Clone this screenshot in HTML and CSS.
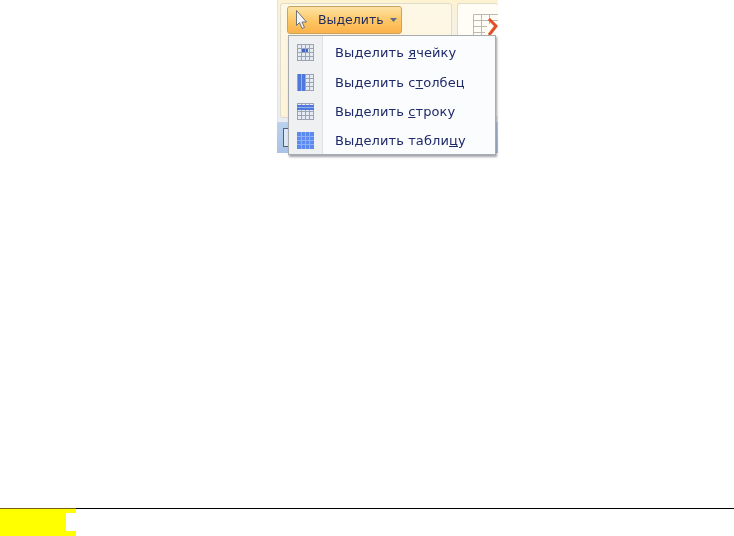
FILE: index.html
```html
<!DOCTYPE html>
<html lang="ru">
<head>
<meta charset="utf-8">
<title>Выделить</title>
<link rel="stylesheet" href="styles.css">
</head>
<body>
<div class="page">
  <div class="shot">
    <div class="ribbon">
      <div class="group group-a">
        <div class="select-btn">
          <svg class="cursor" width="14" height="20" viewBox="0 0 14 20"><path d="M2.500 .500v15l3-3 2.500 6 2.500-1-2.500-5.500h4.500z" fill="#f4f5f7" stroke="#6f7378" stroke-width="1"/></svg>
          <span class="btn-label">Выделить</span>
          <svg class="caret" width="7" height="4" viewBox="0 0 7 4"><path d="M0 0h7L3.500 4z" fill="#5a6a8a"/></svg>
        </div>
      </div>
      <div class="group group-b">
        <svg class="table-icon" width="25" height="24" viewBox="0 0 25 24"><path d="M.500 .500H25M.500 6.500H25M.500 12.500H14M.500 18.500H12M.500 .500V24M8.500 .500V24M16.500 .500V10" stroke="#bdb9b2" fill="none"/><path d="M16 5l7 7-7 9" stroke="#e2502a" stroke-width="3" fill="none"/></svg>
      </div>
    </div>
    <div class="statusbar"><span class="status-box"></span></div>
    <div class="menu">
      <div class="menu-item">
        <span class="icon-cell">
          <svg width="17" height="17" viewBox="0 0 17 17"><rect width="17" height="17" fill="#e6ebf3"/><rect x="5" y="4" width="6" height="5" fill="#3f66c8"/><path d="M.5 0v17M4.500 0v17M8.500 0v17M12.500 0v17M16.500 0v17M0 .5h17M0 4.500h17M0 8.500h17M0 12.500h17M0 16.500h17" stroke="#9aa4b4"/></svg>
        </span>
        <span class="item-text">Выделить <u>я</u>чейку</span>
      </div>
      <div class="menu-item">
        <span class="icon-cell">
          <svg width="17" height="17" viewBox="0 0 17 17"><rect width="17" height="17" fill="#e6ebf3"/><path d="M.5 0v17M4.500 0v17M8.500 0v17M12.500 0v17M16.500 0v17M0 .5h17M0 4.500h17M0 8.500h17M0 12.500h17M0 16.500h17" stroke="#9aa4b4"/><rect x="1" width="7" height="17" fill="#4f78dc"/><path d="M4.500 0v17" stroke="#8fb0ee"/></svg>
        </span>
        <span class="item-text">Выделить с<u>т</u>олбец</span>
      </div>
      <div class="menu-item">
        <span class="icon-cell">
          <svg width="17" height="17" viewBox="0 0 17 17"><rect width="17" height="17" fill="#e6ebf3"/><path d="M.5 0v17M4.500 0v17M8.500 0v17M12.500 0v17M16.500 0v17M0 .5h17M0 4.500h17M0 8.500h17M0 12.500h17M0 16.500h17" stroke="#9aa4b4"/><rect y="2" width="17" height="5" fill="#4f78dc"/><path d="M0 4.500h17" stroke="#8fb0ee"/></svg>
        </span>
        <span class="item-text">Выделить <u>с</u>троку</span>
      </div>
      <div class="menu-item">
        <span class="icon-cell">
          <svg width="17" height="17" viewBox="0 0 17 17"><rect width="17" height="17" fill="#5d8af0"/><path d="M4.500 0v17M8.500 0v17M12.500 0v17M0 4.500h17M0 8.500h17M0 12.500h17" stroke="#8fb0f4"/></svg>
        </span>
        <span class="item-text">Выделить табли<u>ц</u>у</span>
      </div>
    </div>
  </div>
  <div class="spacer"></div>
  <div class="footer">
    <div class="mark"><span class="mark-gap"></span></div>
  </div>
</div>
</body>
</html>
```
FILE: styles.css
```css
* { box-sizing: border-box; }
html, body { margin: 0; padding: 0; background: #fff; }
.page {
  display: flex;
  flex-direction: column;
  width: 734px;
  height: 536px;
  overflow: hidden;
}
.shot {
  position: relative;
  width: 221px;
  height: 161px;
  margin-left: 277px;
  background: #fff;
  filter: blur(.35px);
}
.ribbon {
  display: flex;
  gap: 5px;
  height: 122px;
  padding: 3px 0 0 2px;
  background: linear-gradient(#fdf3d0, #f6f1e4 20%, #e9edf3 100%);
  border-left: 1px solid #dfe3ea;
}
.group {
  height: 115px;
  border: 1px solid #e2dccb;
  border-radius: 3px;
  background: linear-gradient(#fdf7e6, #fdf3d8);
}
.group-a {
  width: 172px;
  padding: 2px 0 0 6px;
}
.group-b {
  flex: 1;
  border-right: 0;
  overflow: hidden;
  background: #fffdf6;
}
.table-icon { display: block; margin: 10px 0 0 15px; }
.select-btn {
  display: flex;
  align-items: center;
  width: 115px;
  height: 28px;
  padding-left: 6px;
  border: 1px solid #c9a45e;
  border-radius: 3px;
  background: linear-gradient(#fde3a4, #fdc868 50%, #fbb24a);
}
.cursor { flex: none; }
.btn-label {
  margin-left: 10px;
  font: 12.500px/1 "DejaVu Sans", sans-serif;
  color: #1f2a5e;
}
.caret { margin-left: 6px; }
.statusbar {
  height: 31px;
  padding: 6px 0 0 6px;
  background: linear-gradient(#bcd2ee, #a9c3e6);
}
.status-box {
  display: block;
  width: 6px;
  height: 19px;
  border: 1px solid #4c5f7c;
  border-right: 0;
  background: #dfe8f5;
}
.menu {
  position: absolute;
  left: 11px;
  top: 35px;
  width: 208px;
  height: 120px;
  padding-top: 2px;
  background: linear-gradient(90deg, #eff0f1 0, #eff0f1 33px, #dfe1e4 33px, #dfe1e4 34px, #fbfcfe 34px);
  border: 1px solid #a8abb0;
  box-shadow: 1px 2px 2px rgba(90, 90, 100, .55);
}
.menu-item {
  display: flex;
  align-items: center;
  height: 29.400px;
}
.icon-cell {
  display: flex;
  justify-content: center;
  width: 17px;
  margin-left: 8px;
}
.item-text {
  margin-left: 21px;
  font: 13px/1 "DejaVu Sans", sans-serif;
  letter-spacing: .1px;
  color: #1f2a6a;
}
.spacer { flex: 1; }
.footer {
  height: 28px;
  border-top: 1px solid #000;
}
.mark {
  display: flex;
  justify-content: flex-end;
  align-items: flex-start;
  width: 76px;
  height: 28px;
  margin-top: -1px;
  padding-top: 4px;
  border-top: 1px solid #7d5c10;
  background: #ff0;
}
.mark-gap {
  display: block;
  width: 10px;
  height: 18px;
  background: #fff;
}
```
